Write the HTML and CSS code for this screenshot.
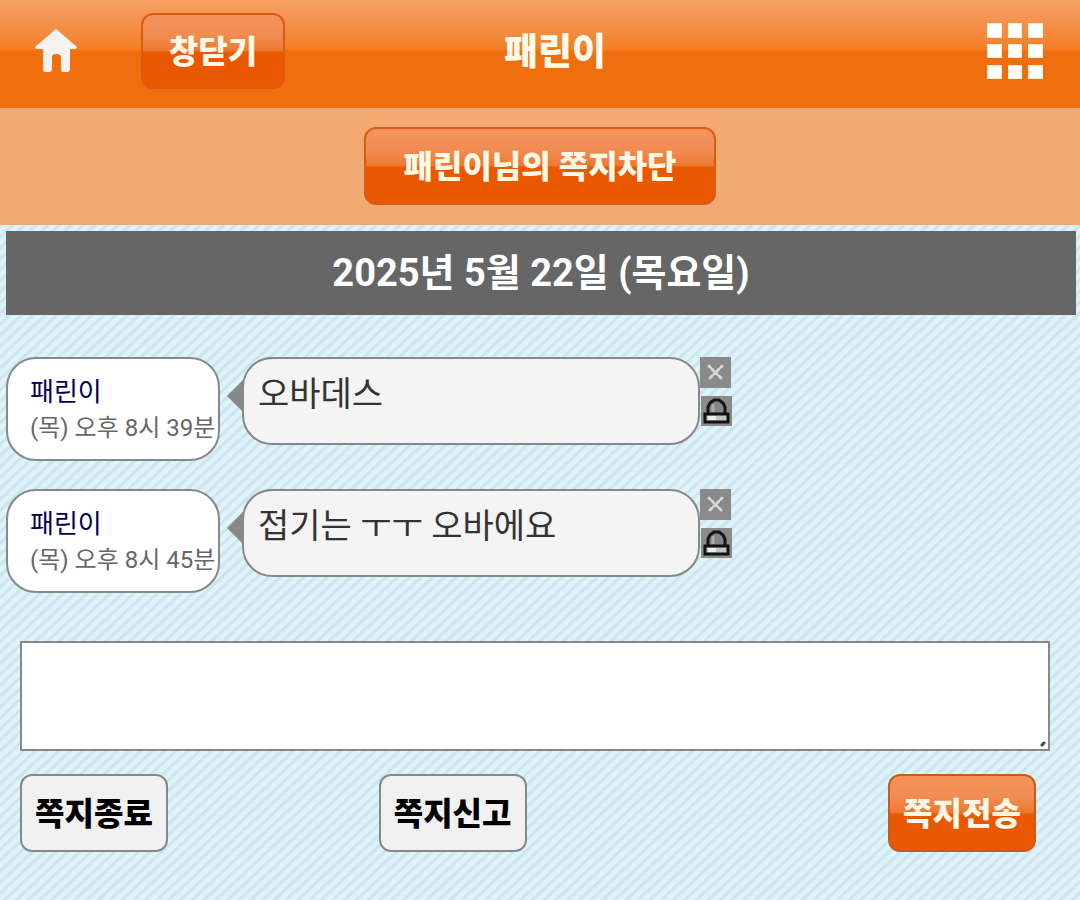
FILE: index.html
```html
<!DOCTYPE html>
<html lang="ko">
<head>
  <meta charset="UTF-8">
  <meta name="viewport" content="width=device-width, initial-scale=1.0">
  <title>패린이</title>
  <link rel="stylesheet" href="styles.css">
</head>
<body>
  <header class="top-bar">
    <div class="top-left">
      <a href="#" class="home" aria-label="홈">
        <svg width="42" height="44" viewBox="0 0 42 44">
          <path fill="#f5f3f1" d="M21 0 L42 18 Q42 20 40 20 H35 V40 Q35 43 32 43 H28 Q26 43 26 40 V28 Q26 25 21 25 Q17 25 17 28 V40 Q17 43 14 43 H10 Q8 43 8 40 V20 H2 Q0 20 0 18 Z"/>
        </svg>
      </a>
      <button type="button" class="btn btn-close">창닫기</button>
    </div>
    <h1>패린이</h1>
    <a href="#" class="menu" aria-label="메뉴">
      <svg width="56" height="56" viewBox="0 0 56 56" fill="#fff" stroke="#ffefcf" stroke-width="1">
        <rect x="0.5" y="0.5" width="14" height="14"/>
        <rect x="21.5" y="0.5" width="13" height="14"/>
        <rect x="41.5" y="0.5" width="14" height="14"/>
        <rect x="0.5" y="21.5" width="14" height="13"/>
        <rect x="21.5" y="21.5" width="13" height="13"/>
        <rect x="41.5" y="21.5" width="14" height="13"/>
        <rect x="0.5" y="42.5" width="14" height="13"/>
        <rect x="21.5" y="42.5" width="13" height="13"/>
        <rect x="41.5" y="42.5" width="14" height="13"/>
      </svg>
    </a>
  </header>

  <div class="block-bar">
    <button type="button" class="btn btn-block">패린이님의 쪽지차단</button>
  </div>

  <main>
    <h2 class="date">2025년 5월 22일 (목요일)</h2>

    <div class="message">
      <div class="sender">
        <a href="#" class="name">패린이</a>
        <div class="time">(목) 오후 8시 39분</div>
      </div>
      <div class="bubble">오바데스</div>
      <div class="tools">
        <button type="button" class="tool" aria-label="삭제">
          <svg width="31" height="31" viewBox="0 0 31 31">
            <path d="M9 9 L22 22 M22 9 L9 22" stroke="#d8d8d8" stroke-width="3" stroke-linecap="round" stroke-dasharray="1 4"/>
            <path d="M9 9 L22 22 M22 9 L9 22" stroke="#d8d8d8" stroke-width="2"/>
          </svg>
        </button>
        <button type="button" class="tool tool-lock" aria-label="신고">
          <svg width="31" height="30" viewBox="0 0 31 30">
            <path d="M7 17 V11 L9 7 L13 4 H18 L22 7 L24 11 V17" fill="#858585" stroke="#161616" stroke-width="3"/>
            <path d="M12 8 V16" stroke="#aaa" stroke-width="3"/>
            <rect x="4" y="18" width="23" height="8" fill="#c4c4c4" stroke="#111" stroke-width="3"/>
            <rect x="7" y="20" width="8" height="4" fill="#ededed"/>
          </svg>
        </button>
      </div>
    </div>

    <div class="message">
      <div class="sender">
        <a href="#" class="name">패린이</a>
        <div class="time">(목) 오후 8시 45분</div>
      </div>
      <div class="bubble">접기는 ㅜㅜ 오바에요</div>
      <div class="tools">
        <button type="button" class="tool" aria-label="삭제">
          <svg width="31" height="31" viewBox="0 0 31 31">
            <path d="M9 9 L22 22 M22 9 L9 22" stroke="#d8d8d8" stroke-width="3" stroke-linecap="round" stroke-dasharray="1 4"/>
            <path d="M9 9 L22 22 M22 9 L9 22" stroke="#d8d8d8" stroke-width="2"/>
          </svg>
        </button>
        <button type="button" class="tool tool-lock" aria-label="신고">
          <svg width="31" height="30" viewBox="0 0 31 30">
            <path d="M7 17 V11 L9 7 L13 4 H18 L22 7 L24 11 V17" fill="#858585" stroke="#161616" stroke-width="3"/>
            <path d="M12 8 V16" stroke="#aaa" stroke-width="3"/>
            <rect x="4" y="18" width="23" height="8" fill="#c4c4c4" stroke="#111" stroke-width="3"/>
            <rect x="7" y="20" width="8" height="4" fill="#ededed"/>
          </svg>
        </button>
      </div>
    </div>

    <form class="write">
      <div class="text-wrap">
        <textarea name="memo" aria-label="쪽지 내용"></textarea>
        <svg class="grip" width="6" height="6" viewBox="0 0 6 6">
          <path d="M2 4 L4 2" stroke="#444" stroke-width="3" stroke-linecap="round"/>
        </svg>
      </div>
      <div class="actions">
        <button type="button" class="btn-plain">쪽지종료</button>
        <button type="button" class="btn-plain">쪽지신고</button>
        <button type="submit" class="btn btn-send">쪽지전송</button>
      </div>
    </form>
  </main>
</body>
</html>
```
FILE: styles.css
```css
* {
  box-sizing: border-box;
}

body {
  margin: 0;
  font-family: Roboto, "Noto Sans CJK KR", sans-serif;
  color: #333;
  background: repeating-linear-gradient(137deg, #def3fa 0, #def3fa 3px, #c8e1ed 5px, #def3fa 8px);
}

.top-bar {
  display: grid;
  grid-template-columns: 1fr auto 1fr;
  align-items: center;
  padding: 13px 37px 19px 35px;
  background: linear-gradient(#f6a263 0, #f59350 20px, #f38029 48px, #f06e0e 52px, #f06e0e 106px, #e8721c 108px);
}

.top-left {
  display: flex;
  align-items: center;
}

.home {
  width: 106px;
}

.home svg,
.menu svg,
.tool svg {
  display: block;
}

.menu {
  justify-self: end;
}

h1 {
  margin: 0;
  padding: 4px 0 0 32px;
  font-size: 37px;
  font-weight: 900;
  line-height: 56px;
  color: #fffbea;
}

.btn,
.btn-plain {
  height: 78px;
  padding: 0 8px 4px;
  border: 2px solid #d95c12;
  border-radius: 12px;
  font-family: inherit;
  font-size: 32px;
  font-weight: 900;
  white-space: nowrap;
  cursor: pointer;
}

.btn {
  color: #fff8e4;
  background: linear-gradient(#f3945c 0, #f08c52 30%, #ee7832 49%, #e95800 52%, #ea5800 100%);
  background-origin: border-box;
}

.btn-close {
  width: 144px;
  height: 76px;
}

.btn-block {
  width: 352px;
}

.block-bar {
  padding: 19px 0 20px;
  text-align: center;
  background: #f2aa72;
}

.block-bar .btn {
  display: block;
  margin: 0 auto;
}

main {
  padding: 6px 4px 48px 6px;
}

.date {
  margin: 0 0 42px;
  font-size: 38px;
  line-height: 84px;
  text-align: center;
  color: #fff;
  background: #666;
}

.message {
  display: flex;
  align-items: flex-start;
  margin-bottom: 28px;
}

.sender {
  width: 214px;
  height: 104px;
  padding: 15px 0 0 22px;
  border: 2px solid #868989;
  border-radius: 30px;
  background: #fff;
  font-size: 26px;
  line-height: 36px;
  white-space: nowrap;
}

.name {
  display: block;
  color: #000055;
  text-decoration: none;
}

.time {
  color: #666;
  font-size: 24px;
}

.bubble {
  position: relative;
  width: 458px;
  min-height: 88px;
  margin-left: 22px;
  padding: 11px 14px;
  border: 2px solid #868989;
  border-radius: 30px;
  background: #f4f4f4;
  font-size: 34px;
  line-height: 48px;
}

/* speech arrow */
.bubble::before {
  content: "";
  position: absolute;
  top: 20px;
  right: 100%;
  border: 17px solid transparent;
  border-left: 0;
  border-right-color: #888;
}

.tool {
  display: block;
  padding: 0;
  border: 0;
  background: #8a8a8a;
  cursor: pointer;
}

.tool-lock {
  margin: 8px 0 0 1px;
}

.write {
  margin-top: 48px;
  padding: 0 26px 0 14px;
}

.text-wrap {
  position: relative;
}

textarea {
  display: block;
  width: 100%;
  height: 110px;
  padding: 8px;
  border: 2px solid #868989;
  border-radius: 0;
  background: #fff;
  font-family: inherit;
  font-size: 34px;
  resize: none;
}

.grip {
  position: absolute;
  right: 4px;
  bottom: 4px;
}

.actions {
  display: grid;
  grid-template-columns: 6fr 8fr 3fr;
  padding: 23px 14px 0 0;
}

.btn-plain,
.btn-send {
  width: 148px;
}

.btn-plain {
  color: #000;
  border-color: #868989;
  background: #f1f1f1;
}

.btn-send {
  justify-self: end;
  border-color: #c65a1c;
}
```
